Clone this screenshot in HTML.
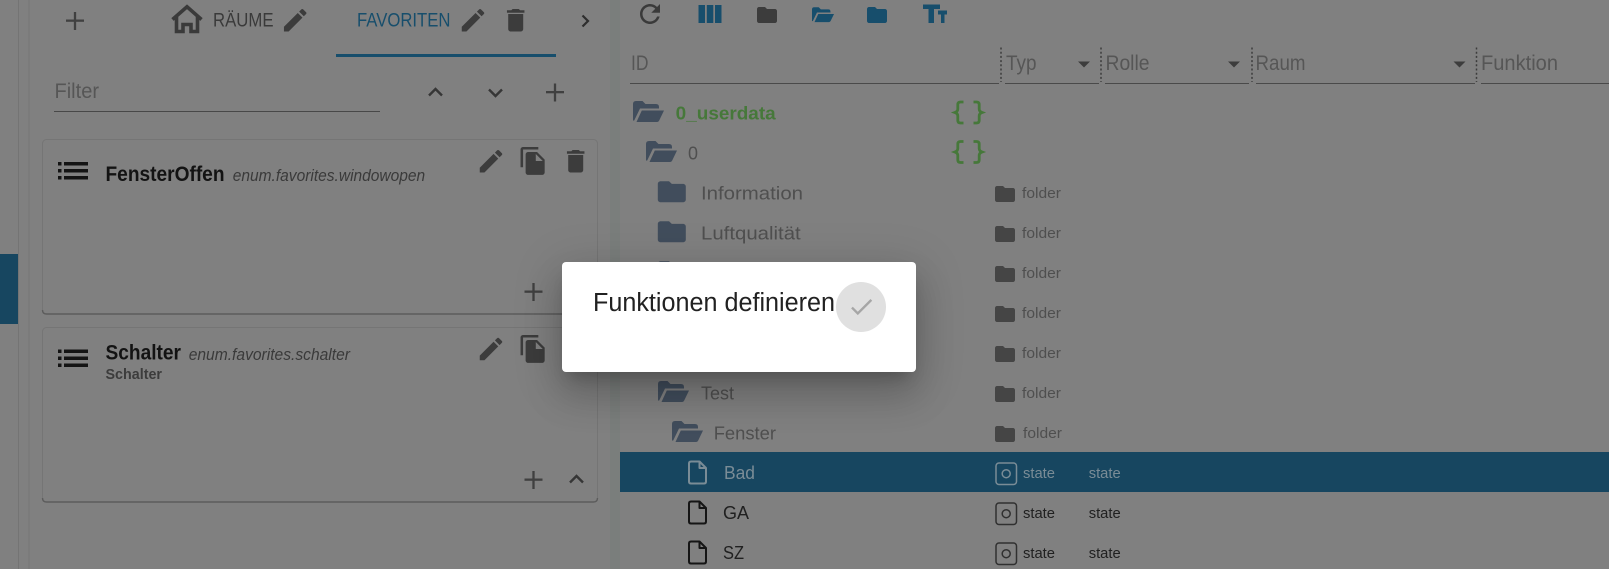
<!DOCTYPE html>
<html lang="de"><head><meta charset="utf-8"><title>Funktionen definieren</title>
<style>
html,body{margin:0;padding:0;width:1609px;height:569px;overflow:hidden;background:#808080}
svg{position:absolute;left:0;top:0;display:block}
text{font-family:"Liberation Sans",sans-serif}
#dlg{position:absolute;left:562px;top:262px;width:354px;height:110px;background:#fff;border-radius:4px;box-shadow:0 11px 15px -7px rgba(0,0,0,.2),0 24px 38px 3px rgba(0,0,0,.14),0 9px 46px 8px rgba(0,0,0,.12)}
</style></head><body>
<svg width="1609" height="569" viewBox="0 0 1609 569" xmlns="http://www.w3.org/2000/svg">
<defs>
<path id="edit" d="M3 17.25V21h3.75L17.81 9.94l-3.75-3.75L3 17.25zM20.71 7.04c.39-.39.39-1.02 0-1.41l-2.34-2.34c-.39-.39-1.02-.39-1.41 0l-1.83 1.83 3.75 3.75 1.83-1.83z"/>
<path id="del" d="M6 19c0 1.1.9 2 2 2h8c1.1 0 2-.9 2-2V7H6v12zM19 4h-3.5l-1-1h-5l-1 1H5v2h14V4z"/>
<path id="copy" d="M16 1H4c-1.1 0-2 .9-2 2v14h2V3h12V1zm-1 4l6 6v10c0 1.1-.9 2-2 2H7.99C6.89 23 6 22.1 6 21l.01-14c0-1.1.89-2 1.99-2h7zm-1 7h5.5L14 6.5V12z"/>
<path id="fold" d="M10 4H4c-1.1 0-1.99.9-1.99 2L2 18c0 1.1.9 2 2 2h16c1.1 0 2-.9 2-2V8c0-1.1-.9-2-2-2h-8l-2-2z"/>
<path id="open" d="M0 19V3Q0 0 3 0H9.5L12.5 3H23Q26 3 26 6V7.500H7L1.200 19.500Q0 20 0 19ZM3.500 21L8.800 9.500H31L26.200 19.500Q25.500 21 24 21Z"/>
<path id="file" d="M3 1H11.500L18 7.500V21Q18 23 16 23H3Q1 23 1 21V3Q1 1 3 1ZM11.500 1V7.500H18" fill="none" stroke-width="2" stroke-linejoin="round"/>
<path id="brace" d="M9.500 1.500H6.500Q3.800 1.500 3.800 4V8.500Q3.800 11 1 12Q3.800 13 3.800 15.500V20Q3.800 22.500 6.500 22.500H9.500M19.500 1.500H22.500Q25.200 1.500 25.200 4V8.500Q25.200 11 28 12Q25.200 13 25.200 15.500V20Q25.200 22.500 22.500 22.500H19.500" fill="none" stroke-width="2.800"/>
<g id="plus"><rect x="0" y="7.500" width="18" height="2.300"/><rect x="7.850" y="0" width="2.300" height="18"/></g>
<g id="list"><rect x="0" y="0" width="3.500" height="3.500"/><rect x="0" y="7" width="3.500" height="3.500"/><rect x="0" y="14" width="3.500" height="3.500"/><rect x="6" y="0" width="24" height="3.500"/><rect x="6" y="7" width="24" height="3.500"/><rect x="6" y="14" width="24" height="3.500"/></g>
<g id="state"><rect x="1" y="1" width="20.500" height="21.500" rx="3" fill="none" stroke-width="1.500"/><circle cx="11.200" cy="11.700" r="4" fill="none" stroke-width="1.500"/></g>
</defs>
<rect width="1609" height="569" fill="#808080"/>
<!-- left rails -->
<rect x="0" y="254" width="18" height="70" fill="#174660"/>
<rect x="18" y="0" width="1" height="569" fill="#747474"/>
<rect x="28.500" y="0" width="1" height="569" fill="#767676"/>
<!-- splitter -->
<rect x="610" y="0" width="10" height="569" fill="#7a7e7c"/>
<!-- tabs -->
<use href="#plus" x="66" y="12" fill="#404040"/>
<path d="M172.500 19.500L187 6.800L201.500 19.500M176.500 17V31.500H183V24.500H191V31.500H197.500V17" fill="none" stroke="#3a3a3a" stroke-width="3.600"/>
<text x="213" y="26.500" font-size="19" fill="#3a3a3a" textLength="60.500" lengthAdjust="spacingAndGlyphs">RÄUME</text>
<use href="#edit" transform="translate(280.200 5.200) scale(1.25)" fill="#3c3c3c"/>
<text x="357" y="26.500" font-size="19" fill="#174e6c" textLength="93.500" lengthAdjust="spacingAndGlyphs">FAVORITEN</text>
<use href="#edit" transform="translate(458 5.200) scale(1.25)" fill="#3c3c3c"/>
<use href="#del" transform="translate(500.700 5.200) scale(1.25)" fill="#3c3c3c"/>
<path d="M582.500 15.500L588 21L582.500 26.500" fill="none" stroke="#2e2e2e" stroke-width="2.200"/>
<rect x="336" y="54" width="220" height="3" fill="#174e6c"/>
<!-- filter -->
<text x="54.500" y="98" font-size="21" fill="#565656" textLength="44.500" lengthAdjust="spacingAndGlyphs">Filter</text>
<rect x="54" y="111" width="326" height="1" fill="#484848"/>
<path d="M429 95.500L435.500 89L442 95.500" fill="none" stroke="#363636" stroke-width="2.400"/>
<path d="M489 89.500L495.500 96L502 89.500" fill="none" stroke="#363636" stroke-width="2.400"/>
<use href="#plus" x="546" y="83.500" fill="#404040"/>
<!-- card 1 -->
<rect x="42.500" y="139.500" width="555" height="174.500" rx="4" fill="#808080" stroke="#757575" stroke-width="1"/>
<path d="M42.500 310Q42.500 314 46.500 314H593.500Q597.500 314 597.500 310" fill="none" stroke="#5c5c5c" stroke-width="1.400"/>
<use href="#list" x="58" y="162" fill="#141414"/>
<text x="105.500" y="181" font-size="21" font-weight="700" fill="#131313" textLength="119" lengthAdjust="spacingAndGlyphs">FensterOffen</text>
<text x="232.700" y="181" font-size="17" font-style="italic" fill="#3a3a3a" textLength="192.500" lengthAdjust="spacingAndGlyphs">enum.favorites.windowopen</text>
<use href="#edit" transform="translate(476 146.200) scale(1.25)" fill="#3c3c3c"/>
<use href="#copy" transform="translate(518 145.700) scale(1.27)" fill="#3c3c3c"/>
<use href="#del" transform="translate(560.700 146.200) scale(1.25)" fill="#3c3c3c"/>
<use href="#plus" x="524.500" y="283" fill="#404040"/>
<!-- card 2 -->
<rect x="42.500" y="327.500" width="555" height="174.500" rx="4" fill="#808080" stroke="#757575" stroke-width="1"/>
<path d="M42.500 498Q42.500 502 46.500 502H593.500Q597.500 502 597.500 498" fill="none" stroke="#5c5c5c" stroke-width="1.400"/>
<use href="#list" x="58" y="349.500" fill="#141414"/>
<text x="105.500" y="359.500" font-size="21" font-weight="700" fill="#131313" textLength="75.500" lengthAdjust="spacingAndGlyphs">Schalter</text>
<text x="188.700" y="360" font-size="17" font-style="italic" fill="#3a3a3a" textLength="161.300" lengthAdjust="spacingAndGlyphs">enum.favorites.schalter</text>
<text x="105.500" y="379" font-size="15" font-weight="700" fill="#3c3c3c" textLength="56.500" lengthAdjust="spacingAndGlyphs">Schalter</text>
<use href="#edit" transform="translate(476 334) scale(1.25)" fill="#3c3c3c"/>
<use href="#copy" transform="translate(518 333.700) scale(1.27)" fill="#3c3c3c"/>
<use href="#plus" x="524.500" y="471" fill="#404040"/>
<path d="M570 482.500L576.500 476L583 482.500" fill="none" stroke="#363636" stroke-width="2.400"/>
<!-- toolbar -->
<path transform="translate(635 -1) scale(1.25)" fill="#3a3a3a" d="M17.650 6.350C16.200 4.900 14.210 4 12 4c-4.420 0-7.990 3.580-7.990 8s3.570 8 7.990 8c3.730 0 6.840-2.550 7.730-6h-2.080c-.82 2.330-3.040 4-5.650 4-3.310 0-6-2.690-6-6s2.690-6 6-6c1.660 0 3.140.69 4.220 1.780L13 11h7V4l-2.350 2.350z"/>
<rect x="698.500" y="5" width="6.500" height="18" fill="#174e6c"/><rect x="706.800" y="5" width="6.500" height="18" fill="#174e6c"/><rect x="715" y="5" width="6.500" height="18" fill="#174e6c"/>
<use href="#fold" x="755" y="3" fill="#3c3c3c"/>
<use href="#open" transform="translate(812 7.200) scale(.71)" fill="#174e6c"/>
<use href="#fold" x="865" y="3" fill="#174e6c"/>
<path d="M923 4.500H940V9H934V23H928.500V9H923ZM938 10.500H947V14.500H944.500V23H941V14.500H938Z" fill="#174e6c"/>
<!-- header -->
<text x="631" y="70" font-size="21" fill="#565656" textLength="17.500" lengthAdjust="spacingAndGlyphs">ID</text>
<text x="1006" y="70" font-size="21" fill="#565656" textLength="30.500" lengthAdjust="spacingAndGlyphs">Typ</text>
<text x="1105.500" y="70" font-size="21" fill="#565656" textLength="44" lengthAdjust="spacingAndGlyphs">Rolle</text>
<text x="1255.500" y="70" font-size="21" fill="#565656" textLength="50" lengthAdjust="spacingAndGlyphs">Raum</text>
<text x="1481" y="70" font-size="21" fill="#565656" textLength="77" lengthAdjust="spacingAndGlyphs">Funktion</text>
<g fill="#4a4a4a"><rect x="630" y="83" width="369" height="1"/><rect x="1005" y="83" width="94" height="1"/><rect x="1105" y="83" width="144" height="1"/><rect x="1256" y="83" width="219" height="1"/><rect x="1481" y="83" width="128" height="1"/></g>
<g stroke="#3c3c3c" stroke-width="1.500" stroke-dasharray="2 2.200"><path d="M1001 47.500V82"/><path d="M1101 47.500V82"/><path d="M1252 47.500V82"/><path d="M1476.500 47.500V82"/></g>
<g fill="#3d3d3d"><path d="M1078 61.500H1090L1084 67.500Z"/><path d="M1228 61.500H1240L1234 67.500Z"/><path d="M1453.500 61.500H1465.500L1459.500 67.500Z"/></g>
<!-- tree -->
<use href="#open" x="633" y="101" fill="#414d5c"/>
<text x="675.700" y="119.500" font-size="18.500" font-weight="700" fill="#46783a" textLength="100" lengthAdjust="spacingAndGlyphs">0_userdata</text>
<use href="#brace" x="954" y="100.500" stroke="#46783a"/>
<use href="#open" x="646" y="141" fill="#414d5c"/>
<text x="688" y="159.500" font-size="18.500" fill="#4f4f4f" textLength="10" lengthAdjust="spacingAndGlyphs">0</text>
<use href="#brace" x="954" y="140" stroke="#46783a"/>
<use href="#fold" transform="translate(655 176) scale(1.4 1.31)" fill="#414d5c"/>
<text x="701" y="199.500" font-size="18.500" fill="#4f4f4f" textLength="102" lengthAdjust="spacingAndGlyphs">Information</text>
<use href="#fold" transform="translate(655 216) scale(1.4 1.31)" fill="#414d5c"/>
<text x="701" y="239.500" font-size="18.500" fill="#4f4f4f" textLength="99.700" lengthAdjust="spacingAndGlyphs">Luftqualität</text>
<use href="#fold" transform="translate(655 256) scale(1.4 1.31)" fill="#414d5c"/>
<use href="#open" x="658" y="381" fill="#414d5c"/>
<text x="701" y="399.500" font-size="18.500" fill="#4f4f4f" textLength="33" lengthAdjust="spacingAndGlyphs">Test</text>
<use href="#open" x="672" y="421" fill="#414d5c"/>
<text x="713.700" y="439.500" font-size="18.500" fill="#4f4f4f" textLength="62.300" lengthAdjust="spacingAndGlyphs">Fenster</text>
<!-- folder type col -->
<g fill="#454545">
<use href="#fold" x="993" y="182"/><use href="#fold" x="993" y="222"/><use href="#fold" x="993" y="262"/><use href="#fold" x="993" y="302"/><use href="#fold" x="993" y="342"/><use href="#fold" x="993" y="382"/><use href="#fold" x="993" y="422"/>
</g>
<g font-size="14.500" fill="#4f4f4f">
<text x="1022" y="198" textLength="39" lengthAdjust="spacingAndGlyphs">folder</text>
<text x="1022" y="238" textLength="39" lengthAdjust="spacingAndGlyphs">folder</text>
<text x="1022" y="278" textLength="39" lengthAdjust="spacingAndGlyphs">folder</text>
<text x="1022" y="318" textLength="39" lengthAdjust="spacingAndGlyphs">folder</text>
<text x="1022" y="358" textLength="39" lengthAdjust="spacingAndGlyphs">folder</text>
<text x="1022" y="398" textLength="39" lengthAdjust="spacingAndGlyphs">folder</text>
<text x="1023" y="438" textLength="39" lengthAdjust="spacingAndGlyphs">folder</text>
</g>
<!-- selected row -->
<rect x="620" y="452" width="989" height="40" fill="#174660"/>
<use href="#file" x="688" y="460.500" stroke="#7a8c96"/>
<text x="724" y="479" font-size="18.500" fill="#7a8c96" textLength="31" lengthAdjust="spacingAndGlyphs">Bad</text>
<use href="#state" x="995" y="462" stroke="#7a8c96"/>
<text x="1023" y="478" font-size="15" fill="#7a8c96" textLength="32" lengthAdjust="spacingAndGlyphs">state</text>
<text x="1088.700" y="478" font-size="15" fill="#7a8c96" textLength="32" lengthAdjust="spacingAndGlyphs">state</text>
<!-- GA -->
<use href="#file" x="688" y="500.500" stroke="#151515"/>
<text x="723" y="519" font-size="18.500" fill="#202020" textLength="26" lengthAdjust="spacingAndGlyphs">GA</text>
<use href="#state" x="995" y="502" stroke="#303030"/>
<text x="1023" y="518" font-size="15" fill="#202020" textLength="32" lengthAdjust="spacingAndGlyphs">state</text>
<text x="1088.700" y="518" font-size="15" fill="#202020" textLength="32" lengthAdjust="spacingAndGlyphs">state</text>
<!-- SZ -->
<use href="#file" x="688" y="540.500" stroke="#151515"/>
<text x="723" y="559" font-size="18.500" fill="#202020" textLength="21" lengthAdjust="spacingAndGlyphs">SZ</text>
<use href="#state" x="995" y="542" stroke="#303030"/>
<text x="1023" y="558" font-size="15" fill="#202020" textLength="32" lengthAdjust="spacingAndGlyphs">state</text>
<text x="1088.700" y="558" font-size="15" fill="#202020" textLength="32" lengthAdjust="spacingAndGlyphs">state</text>
</svg>
<div id="dlg"></div>
<svg width="1609" height="569" viewBox="0 0 1609 569" xmlns="http://www.w3.org/2000/svg">
<text x="593" y="311" font-size="25.500" fill="#212121" textLength="242" lengthAdjust="spacingAndGlyphs">Funktionen definieren</text>
<circle cx="861" cy="307" r="25" fill="#e0e0e0"/>
<path transform="translate(847 292.300) scale(1.2)" fill="#a6a6a6" d="M9 16.170L4.830 12l-1.410 1.410L9 19 21 7l-1.410-1.410z"/>
</svg>
</body></html>
